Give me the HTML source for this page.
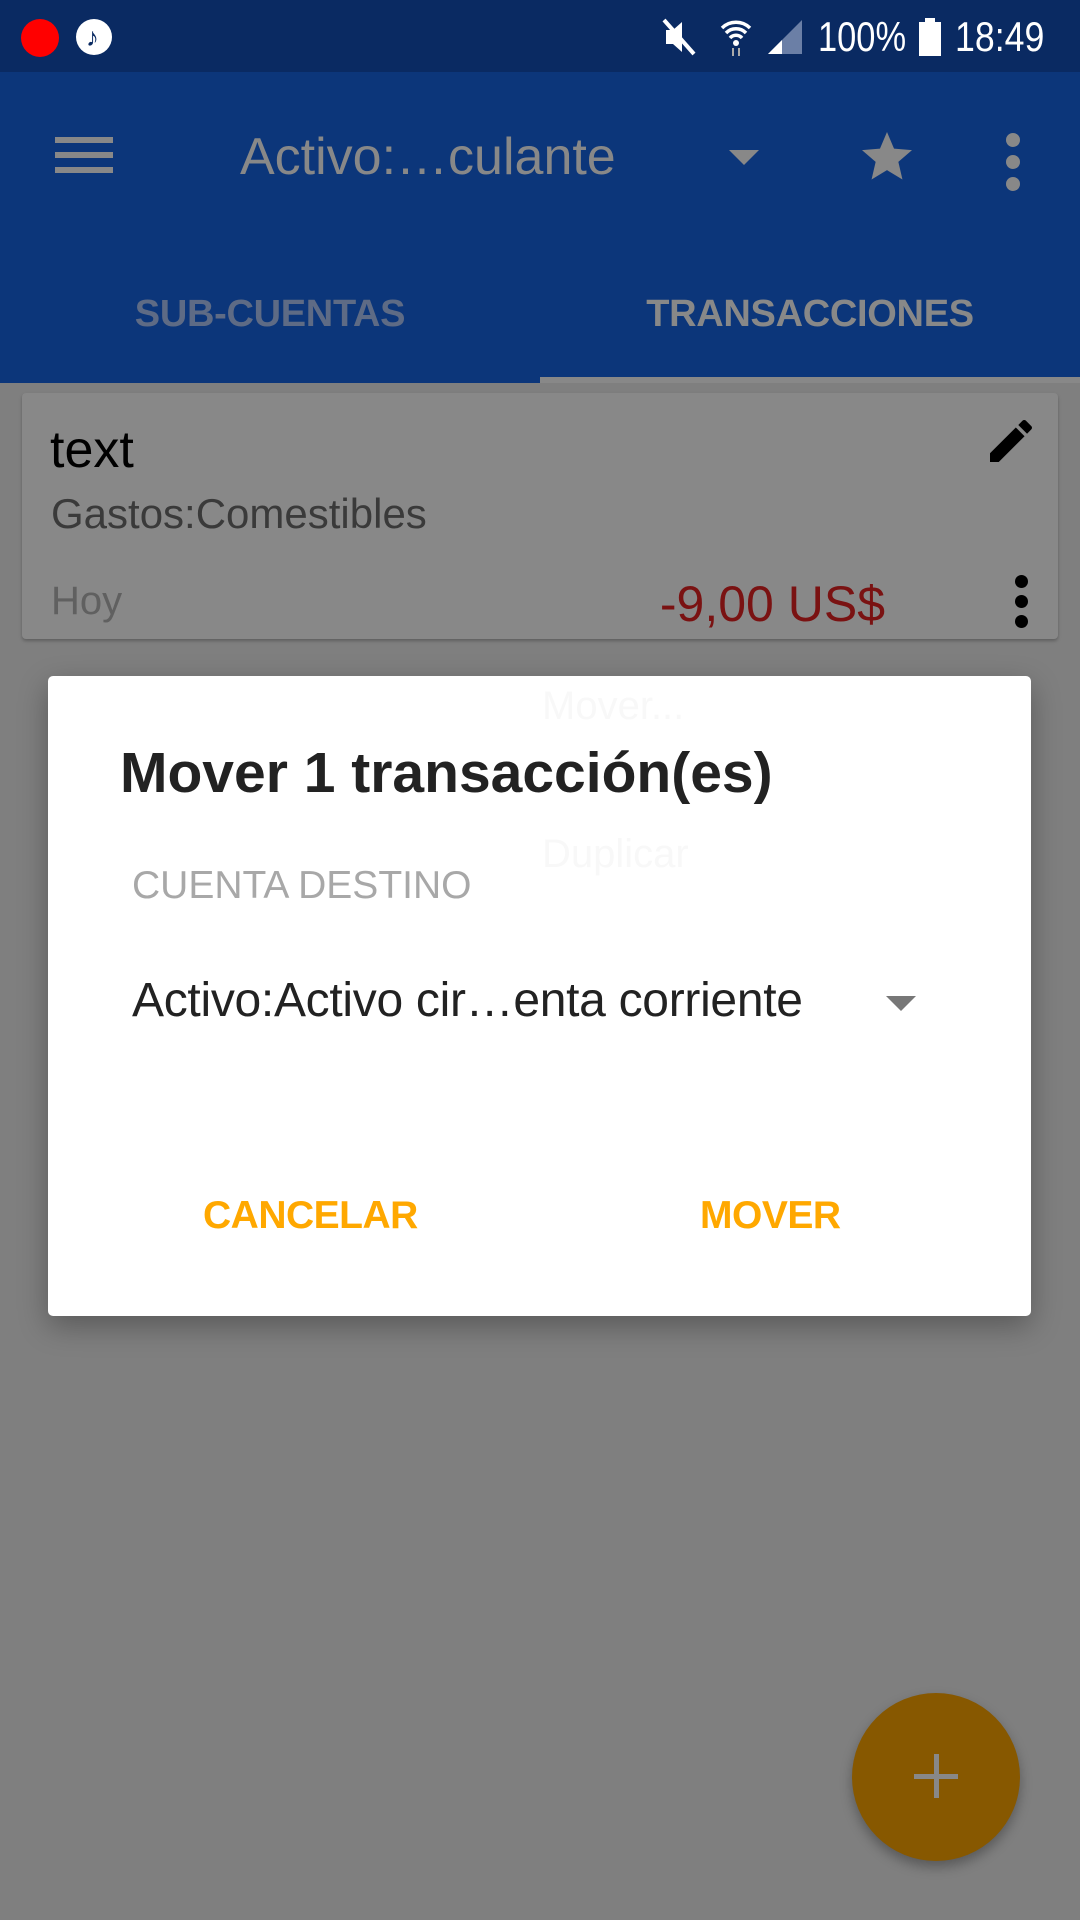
<!DOCTYPE html>
<html><head><meta charset="utf-8"><style>
*{margin:0;padding:0;box-sizing:border-box}
body{width:1080px;height:1920px;position:relative;overflow:hidden;background:#7f7f7f;font-family:"Liberation Sans",sans-serif}
.a{position:absolute;white-space:nowrap}
</style></head><body>
<!-- status bar -->
<div class="a" style="left:0;top:0;width:1080px;height:72px;background:#0a2a62"></div>
<div class="a" style="left:21px;top:19px;width:38px;height:38px;border-radius:50%;background:#f00"></div>
<div class="a" style="left:76px;top:19px;width:36px;height:36px;border-radius:50%;background:#fff"></div>
<div class="a" style="left:86px;top:23px;font-size:26px;color:#0a2a62;font-weight:bold;line-height:28px">♪</div>
<svg class="a" style="left:660px;top:16px" width="150" height="42" viewBox="0 0 150 42">
<path d="M6 14h7l9-8v30l-9-8H6z" fill="#fff"/><path d="M4 4l30 34" stroke="#fff" stroke-width="4"/>
<path d="M62 12a20 20 0 0 1 28 0M66 17a14 14 0 0 1 20 0M70 22a8 8 0 0 1 12 0" stroke="#fff" stroke-width="3.5" fill="none"/>
<circle cx="76" cy="27" r="3" fill="#fff"/>
<path d="M73 32v8M79 32v8" stroke="#aaa" stroke-width="2"/>
<path d="M108 38L142 4V38Z" fill="#6b7fa6"/><path d="M108 38L122 24V38Z" fill="#fff"/>
</svg>
<div class="a" style="left:818px;top:14px;font-size:42px;color:#fff;line-height:46px;transform:scaleX(.82);transform-origin:left">100%</div>
<div class="a" style="left:919px;top:22px;width:22px;height:34px;background:#fff"></div>
<div class="a" style="left:925px;top:18px;width:10px;height:5px;background:#fff"></div>
<div class="a" style="left:955px;top:14px;font-size:42px;color:#fff;line-height:46px;transform:scaleX(.85);transform-origin:left">18:49</div>
<!-- app bar -->
<div class="a" style="left:0;top:72px;width:1080px;height:311px;background:#0c367a"></div>
<div class="a" style="left:55px;top:137px;width:58px;height:6px;background:#888"></div>
<div class="a" style="left:55px;top:152px;width:58px;height:6px;background:#888"></div>
<div class="a" style="left:55px;top:167px;width:58px;height:6px;background:#888"></div>
<div class="a" style="left:240px;top:128px;font-size:52px;line-height:58px;color:#888">Activo:…culante</div>
<div class="a" style="left:729px;top:150px;width:0;height:0;border-left:15px solid transparent;border-right:15px solid transparent;border-top:15px solid #888"></div>
<svg class="a" style="left:857px;top:127px" width="60" height="60" viewBox="0 0 24 24"><path d="M12 17.27L18.18 21l-1.64-7.03L22 9.24l-7.19-.61L12 2 9.19 8.63 2 9.24l5.46 4.73L5.82 21z" fill="#888"/></svg>
<div class="a" style="left:1006px;top:133px;width:14px;height:14px;border-radius:50%;background:#888;box-shadow:0 22px 0 #888,0 44px 0 #888"></div>
<div class="a" style="left:0;top:292px;width:540px;text-align:center;font-size:38px;font-weight:bold;color:#5e6b85;line-height:44px;letter-spacing:-.3px">SUB-CUENTAS</div>
<div class="a" style="left:540px;top:292px;width:540px;text-align:center;font-size:38px;font-weight:bold;color:#888;line-height:44px;letter-spacing:-.3px">TRANSACCIONES</div>
<div class="a" style="left:540px;top:377px;width:540px;height:6px;background:#888"></div>
<!-- card -->
<div class="a" style="left:22px;top:393px;width:1036px;height:246px;background:#888;border-radius:4px;box-shadow:0 2px 3px rgba(0,0,0,.25)"></div>
<div class="a" style="left:50px;top:421px;font-size:52px;line-height:58px;color:#000">text</div>
<svg class="a" style="left:983px;top:413px" width="56" height="56" viewBox="0 0 24 24"><path d="M3 17.25V21h3.75L17.81 9.94l-3.75-3.75L3 17.25zM20.71 7.04a1 1 0 0 0 0-1.41l-2.34-2.34a1 1 0 0 0-1.41 0l-1.83 1.83 3.75 3.75 1.83-1.83z" fill="#000"/></svg>
<div class="a" style="left:51px;top:490px;font-size:42px;line-height:48px;color:#3a3a3a">Gastos:Comestibles</div>
<div class="a" style="left:51px;top:578px;font-size:40px;line-height:46px;color:#606060">Hoy</div>
<div class="a" style="left:580px;top:576px;width:305px;text-align:right;font-size:50px;line-height:56px;color:#7a1212">-9,00 US$</div>
<div class="a" style="left:1015px;top:575px;width:13px;height:13px;border-radius:50%;background:#000;box-shadow:0 20px 0 #000,0 40px 0 #000"></div>
<!-- dialog -->
<div class="a" style="left:48px;top:676px;width:983px;height:640px;background:#fff;border-radius:5px;box-shadow:0 10px 30px rgba(0,0,0,.3)"></div>
<div class="a" style="left:542px;top:684px;font-size:40px;color:#f8f8f8">Mover...</div>
<div class="a" style="left:542px;top:832px;font-size:40px;color:#f8f8f8">Duplicar</div>
<div class="a" style="left:120px;top:741px;font-size:57px;line-height:64px;font-weight:bold;color:#222">Mover 1 transacción(es)</div>
<div class="a" style="left:132px;top:864px;font-size:39px;line-height:44px;color:#a8a8a8">CUENTA DESTINO</div>
<div class="a" style="left:132px;top:974px;font-size:48px;line-height:54px;color:#222;letter-spacing:-.3px">Activo:Activo cir…enta corriente</div>
<div class="a" style="left:886px;top:996px;width:0;height:0;border-left:15px solid transparent;border-right:15px solid transparent;border-top:15px solid #777"></div>
<div class="a" style="left:203px;top:1194px;font-size:39px;line-height:44px;font-weight:bold;color:#ffa800;letter-spacing:-.5px">CANCELAR</div>
<div class="a" style="left:700px;top:1194px;font-size:39px;line-height:44px;font-weight:bold;color:#ffa800;letter-spacing:-.5px">MOVER</div>
<!-- fab -->
<div class="a" style="left:852px;top:1693px;width:168px;height:168px;border-radius:50%;background:#875800;box-shadow:0 6px 12px rgba(0,0,0,.3)"></div>
<div class="a" style="left:914px;top:1774px;width:44px;height:5px;background:#888"></div>
<div class="a" style="left:934px;top:1754px;width:5px;height:44px;background:#888"></div>
</body></html>
